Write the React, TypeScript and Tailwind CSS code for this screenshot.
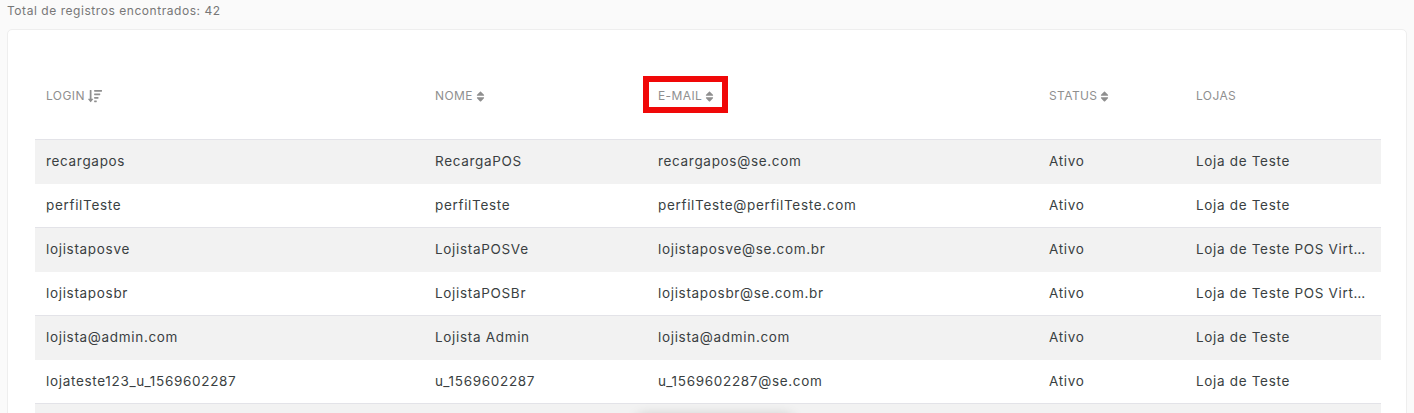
import { FaSort, FaSortAmountDown } from "react-icons/fa";

const rows = [
  { login: "recargapos", nome: "RecargaPOS", email: "recargapos@se.com", status: "Ativo", loja: "Loja de Teste" },
  { login: "perfilTeste", nome: "perfilTeste", email: "perfilTeste@perfilTeste.com", status: "Ativo", loja: "Loja de Teste" },
  { login: "lojistaposve", nome: "LojistaPOSVe", email: "lojistaposve@se.com.br", status: "Ativo", loja: "Loja de Teste POS Virtual" },
  { login: "lojistaposbr", nome: "LojistaPOSBr", email: "lojistaposbr@se.com.br", status: "Ativo", loja: "Loja de Teste POS Virtual" },
  { login: "lojista@admin.com", nome: "Lojista Admin", email: "lojista@admin.com", status: "Ativo", loja: "Loja de Teste" },
  { login: "lojateste123_u_1569602287", nome: "u_1569602287", email: "u_1569602287@se.com", status: "Ativo", loja: "Loja de Teste" },
  { login: "", nome: "", email: "", status: "", loja: "" },
];

export default function App() {
  return (
    <div className="relative h-[413px] overflow-hidden bg-[#fafafa] px-[7px] font-['Inter',sans-serif]">
      <p className="pt-[2px] text-[12px] leading-[18px] tracking-[0.55px] text-[#777]">Total de registros encontrados: 42</p>
      <div className="mt-[9px] rounded-[5px] border border-[#eeeeee] bg-white px-[27px] pt-[20px]">
        <table className="w-[1346px] table-fixed border-collapse">
          <thead>
            <tr className="h-[89px] text-left text-[12px] tracking-[0.4px] text-[#8f8f8f]">
              <th className="w-[389px] pl-[11px] pt-[4px] font-normal">
                <span className="flex items-center gap-[3px]">LOGIN <FaSortAmountDown className="text-[14px]" /></span>
              </th>
              <th className="w-[223px] pl-[11px] pt-[4px] font-normal">
                <span className="flex items-center gap-[1px]">NOME <FaSort className="text-[13px]" /></span>
              </th>
              <th className="w-[391px] pl-[11px] pt-[4px] font-normal">
                <span className="relative flex items-center gap-[1px]">
                  E-MAIL <FaSort className="text-[13px]" />
                  <span className="absolute left-[-15px] top-[-11px] h-[37px] w-[85px] border-[6px] border-[#f00808]" />
                </span>
              </th>
              <th className="w-[147px] pl-[11px] pt-[4px] font-normal">
                <span className="flex items-center gap-[1px]">STATUS <FaSort className="text-[13px]" /></span>
              </th>
              <th className="pl-[11px] pt-[4px] font-normal">LOJAS</th>
            </tr>
          </thead>
          <tbody>
            {rows.map((row, index) => (
              <tr
                key={index}
                className={`h-[44px] border-t text-[13.5px] tracking-[0.68px] text-[#3a3f42] ${index % 2 === 0 ? "border-[#e3e3e8] bg-[#f2f2f2]" : "border-[#f2f2f2] bg-white"}`}
              >
                <td className="pl-[11px] pt-[1px]">{row.login}</td>
                <td className="pl-[11px] pt-[1px]">{row.nome}</td>
                <td className="pl-[11px] pt-[1px]">{row.email}</td>
                <td className="pl-[11px] pt-[1px]">{row.status}</td>
                <td className="truncate pl-[11px] pr-[14px] pt-[1px]">{row.loja}</td>
              </tr>
            ))}
          </tbody>
        </table>
      </div>
      <div className="absolute left-[635px] top-[414px] h-[20px] w-[160px] rounded-[10px] shadow-[0_0_12px_rgba(0,0,0,0.15)]" />
    </div>
  );
}
